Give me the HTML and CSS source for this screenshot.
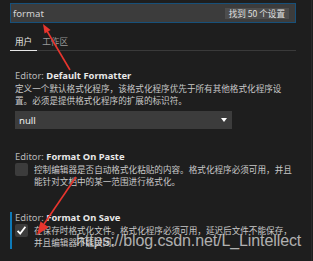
FILE: index.html
```html
<!DOCTYPE html>
<html lang="zh-CN">
<head>
  <meta charset="UTF-8">
  <title>设置</title>
  <link rel="stylesheet" href="styles.css">
</head>
<body>

<!-- Editeur de parametres -->
<div class="settings">
  <div class="search">
    <span class="search-text">format</span>
    <span class="count">找到 50 个设置</span>
  </div>

  <div class="tabs">
    <span class="tab active">用户</span>
    <span class="tab">工作区</span>
  </div>

  <div class="setting first">
    <div class="title"><span class="cat">Editor: </span><b>Default Formatter</b></div>
    <div class="desc">定义一个默认格式化程序，该格式化程序优先于所有其他格式化程序设<br>置。必须是提供格式化程序的扩展的标识符。</div>
    <div class="select">
      <span>null</span>
      <span class="caret"></span>
    </div>
  </div>

  <div class="setting second">
    <div class="title"><span class="cat">Editor: </span><b>Format On Paste</b></div>
    <div class="check-row">
      <span class="checkbox"></span>
      <div class="desc">控制编辑器是否自动格式化粘贴的内容。格式化程序必须可用，并且<br>能针对文档中的某一范围进行格式化。</div>
    </div>
  </div>

  <div class="setting third focused">
    <div class="title"><span class="cat">Editor: </span><b>Format On Save</b></div>
    <div class="check-row">
      <span class="checkbox checked">
        <svg width="13" height="13" viewBox="0 0 13 13"><path d="M2.6 6.8 L5.2 9.6 L10.4 2.8" fill="none" stroke="#fff" stroke-width="1.8"/></svg>
      </span>
      <div class="desc">在保存时格式化文件。格式化程序必须可用，延迟后文件不能保存，<br>并且编辑器不能关闭。</div>
    </div>
  </div>
</div>

<div class="scroll-edge"></div>

<!-- Annotations -->
<svg class="arrows" width="313" height="261" viewBox="0 0 313 261">
  <line x1="70" y1="70" x2="47" y2="31" stroke="#e8352e" stroke-width="1.6"/>
  <polygon points="43,24 50.6,30 44.6,33.6" fill="#e8352e"/>
  <line x1="76" y1="177" x2="44" y2="224" stroke="#e8352e" stroke-width="1.6"/>
  <polygon points="37,235 40.5,221.5 48.7,227.3" fill="#e8352e"/>
</svg>

<div class="watermark">https://blog.csdn.net/L_Lintellect</div>

</body>
</html>
```

FILE: styles.css
```css
/* Style global */
body {
  margin: 0;
  padding: 0;
  width: 313px;
  height: 261px;
  overflow: hidden;
  background-color: #1e1e1e;
  font-family: "Noto Sans", "Noto Sans CJK SC", sans-serif;
  color: #cccccc;
  display: flex;
}

.settings {
  flex: none;
  width: 296px;
  margin-left: 10px;
}

/* Recherche */
.search {
  margin-top: 3px;
  height: 18px;
  width: 276px;
  border: 1px solid #17507a;
  background-color: #3c3c3c;
  display: flex;
  align-items: center;
  justify-content: space-between;
  padding: 0 6px 0 2px;
  box-sizing: content-box;
}

.search-text {
  font-size: 9.6px;
  color: #d4d4d4;
}

.count {
  background-color: #4d4d4d;
  color: #e0e0e0;
  font-size: 8.6px;
  line-height: 11px;
  padding: 0 4px;
  font-family: "Noto Sans CJK SC", sans-serif;
}

/* Onglets */
.tabs {
  width: 286px;
  padding-top: 12px;
  border-bottom: 1px solid #3a3a3a;
  display: flex;
}

.tab {
  font-family: "Noto Sans CJK SC", sans-serif;
  font-size: 8.6px;
  line-height: 12px;
  padding: 0 5px 3px 5px;
  color: #9a9a9a;
}

.tab.active {
  color: #e7e7e7;
  border-bottom: 1px solid #e7e7e7;
  margin-bottom: -1px;
}

/* Parametres */
.setting {
  padding-left: 5px;
}

.setting.first {
  margin-top: 19px;
}

.setting.second {
  margin-top: 22px;
}

.setting.third {
  margin-top: 25px;
}

.setting.focused {
  border-left: 2px solid #0e7ab8;
  padding-left: 3px;
  height: 37px;
}

.title {
  font-size: 9.4px;
  line-height: 12px;
  color: #b8b8b8;
  white-space: nowrap;
}

.title b {
  color: #e8e8e8;
  font-weight: 700;
}

.desc {
  font-family: "Noto Sans CJK SC", sans-serif;
  font-size: 8.6px;
  line-height: 12px;
  color: #c8c8c8;
  white-space: nowrap;
}

.select {
  margin-top: 5px;
  width: 217px;
  height: 18px;
  background-color: #3c3c3c;
  display: flex;
  align-items: center;
  justify-content: space-between;
  padding: 0 4px;
  box-sizing: border-box;
  font-size: 9.6px;
  color: #f0f0f0;
}

.caret {
  width: 0;
  height: 0;
  border-left: 3px solid transparent;
  border-right: 3px solid transparent;
  border-top: 4px solid #ffffff;
  margin-right: 1px;
}

.check-row {
  display: flex;
  gap: 6px;
}

.checkbox {
  flex: none;
  width: 13px;
  height: 13px;
  background-color: #3c3c3c;
  border-radius: 2px;
  display: flex;
}

.scroll-edge {
  margin-left: 5px;
  width: 1px;
  background-color: #2a2a2a;
}

/* Annotations */
.arrows {
  position: absolute;
  top: 0;
  left: 0;
}

.watermark {
  position: absolute;
  left: 76px;
  top: 232px;
  font-family: "Liberation Sans", Arial, sans-serif;
  font-size: 16px;
  color: rgba(235, 235, 235, 0.72);
  letter-spacing: -0.1px;
  white-space: nowrap;
}
```
